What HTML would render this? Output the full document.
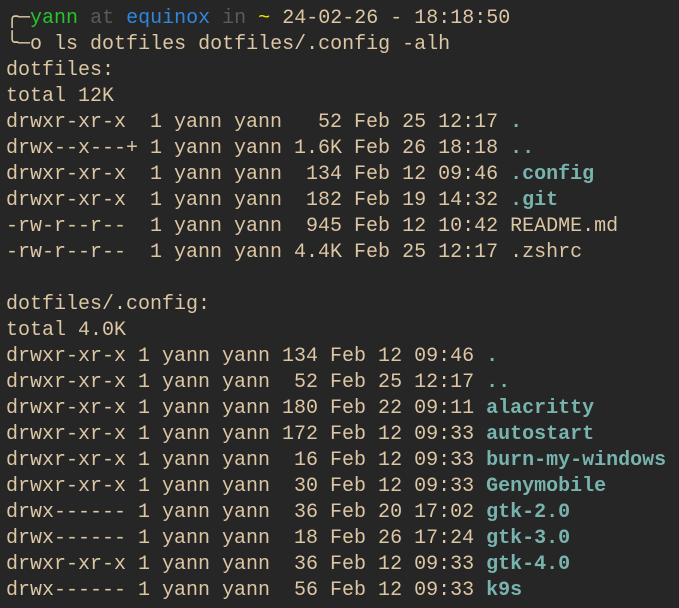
<!DOCTYPE html>
<html><head><meta charset="utf-8"><style>
html,body{margin:0;padding:0;background:#262626;width:679px;height:608px;overflow:hidden}
pre{margin:0;padding:6px 0 0 6px;font-family:"Liberation Mono","DejaVu Sans Mono",monospace;font-size:20px;line-height:26px;color:#dcc6a3;letter-spacing:0}
.g{color:#29c42a}.d{color:#5a5a5a}.b{color:#2f86dd}.y{color:#f2e600}
.t{color:#78b3ae;font-weight:bold}.p{color:#dcc6a3}
</style></head><body><pre><span class="p">╭─</span><span class="g">yann</span> <span class="d">at</span> <span class="b">equinox</span> <span class="d">in</span> <span class="y">~</span> 24-02-26 - 18:18:50
<span class="p">╰─o</span> ls dotfiles dotfiles/.config -alh
dotfiles:
total 12K
drwxr-xr-x  1 yann yann   52 Feb 25 12:17 <span class="t">.</span>
drwx--x---+ 1 yann yann 1.6K Feb 26 18:18 <span class="t">..</span>
drwxr-xr-x  1 yann yann  134 Feb 12 09:46 <span class="t">.config</span>
drwxr-xr-x  1 yann yann  182 Feb 19 14:32 <span class="t">.git</span>
-rw-r--r--  1 yann yann  945 Feb 12 10:42 README.md
-rw-r--r--  1 yann yann 4.4K Feb 25 12:17 .zshrc

dotfiles/.config:
total 4.0K
drwxr-xr-x 1 yann yann 134 Feb 12 09:46 <span class="t">.</span>
drwxr-xr-x 1 yann yann  52 Feb 25 12:17 <span class="t">..</span>
drwxr-xr-x 1 yann yann 180 Feb 22 09:11 <span class="t">alacritty</span>
drwxr-xr-x 1 yann yann 172 Feb 12 09:33 <span class="t">autostart</span>
drwxr-xr-x 1 yann yann  16 Feb 12 09:33 <span class="t">burn-my-windows</span>
drwxr-xr-x 1 yann yann  30 Feb 12 09:33 <span class="t">Genymobile</span>
drwx------ 1 yann yann  36 Feb 20 17:02 <span class="t">gtk-2.0</span>
drwx------ 1 yann yann  18 Feb 26 17:24 <span class="t">gtk-3.0</span>
drwxr-xr-x 1 yann yann  36 Feb 12 09:33 <span class="t">gtk-4.0</span>
drwx------ 1 yann yann  56 Feb 12 09:33 <span class="t">k9s</span>
</pre></body></html>
